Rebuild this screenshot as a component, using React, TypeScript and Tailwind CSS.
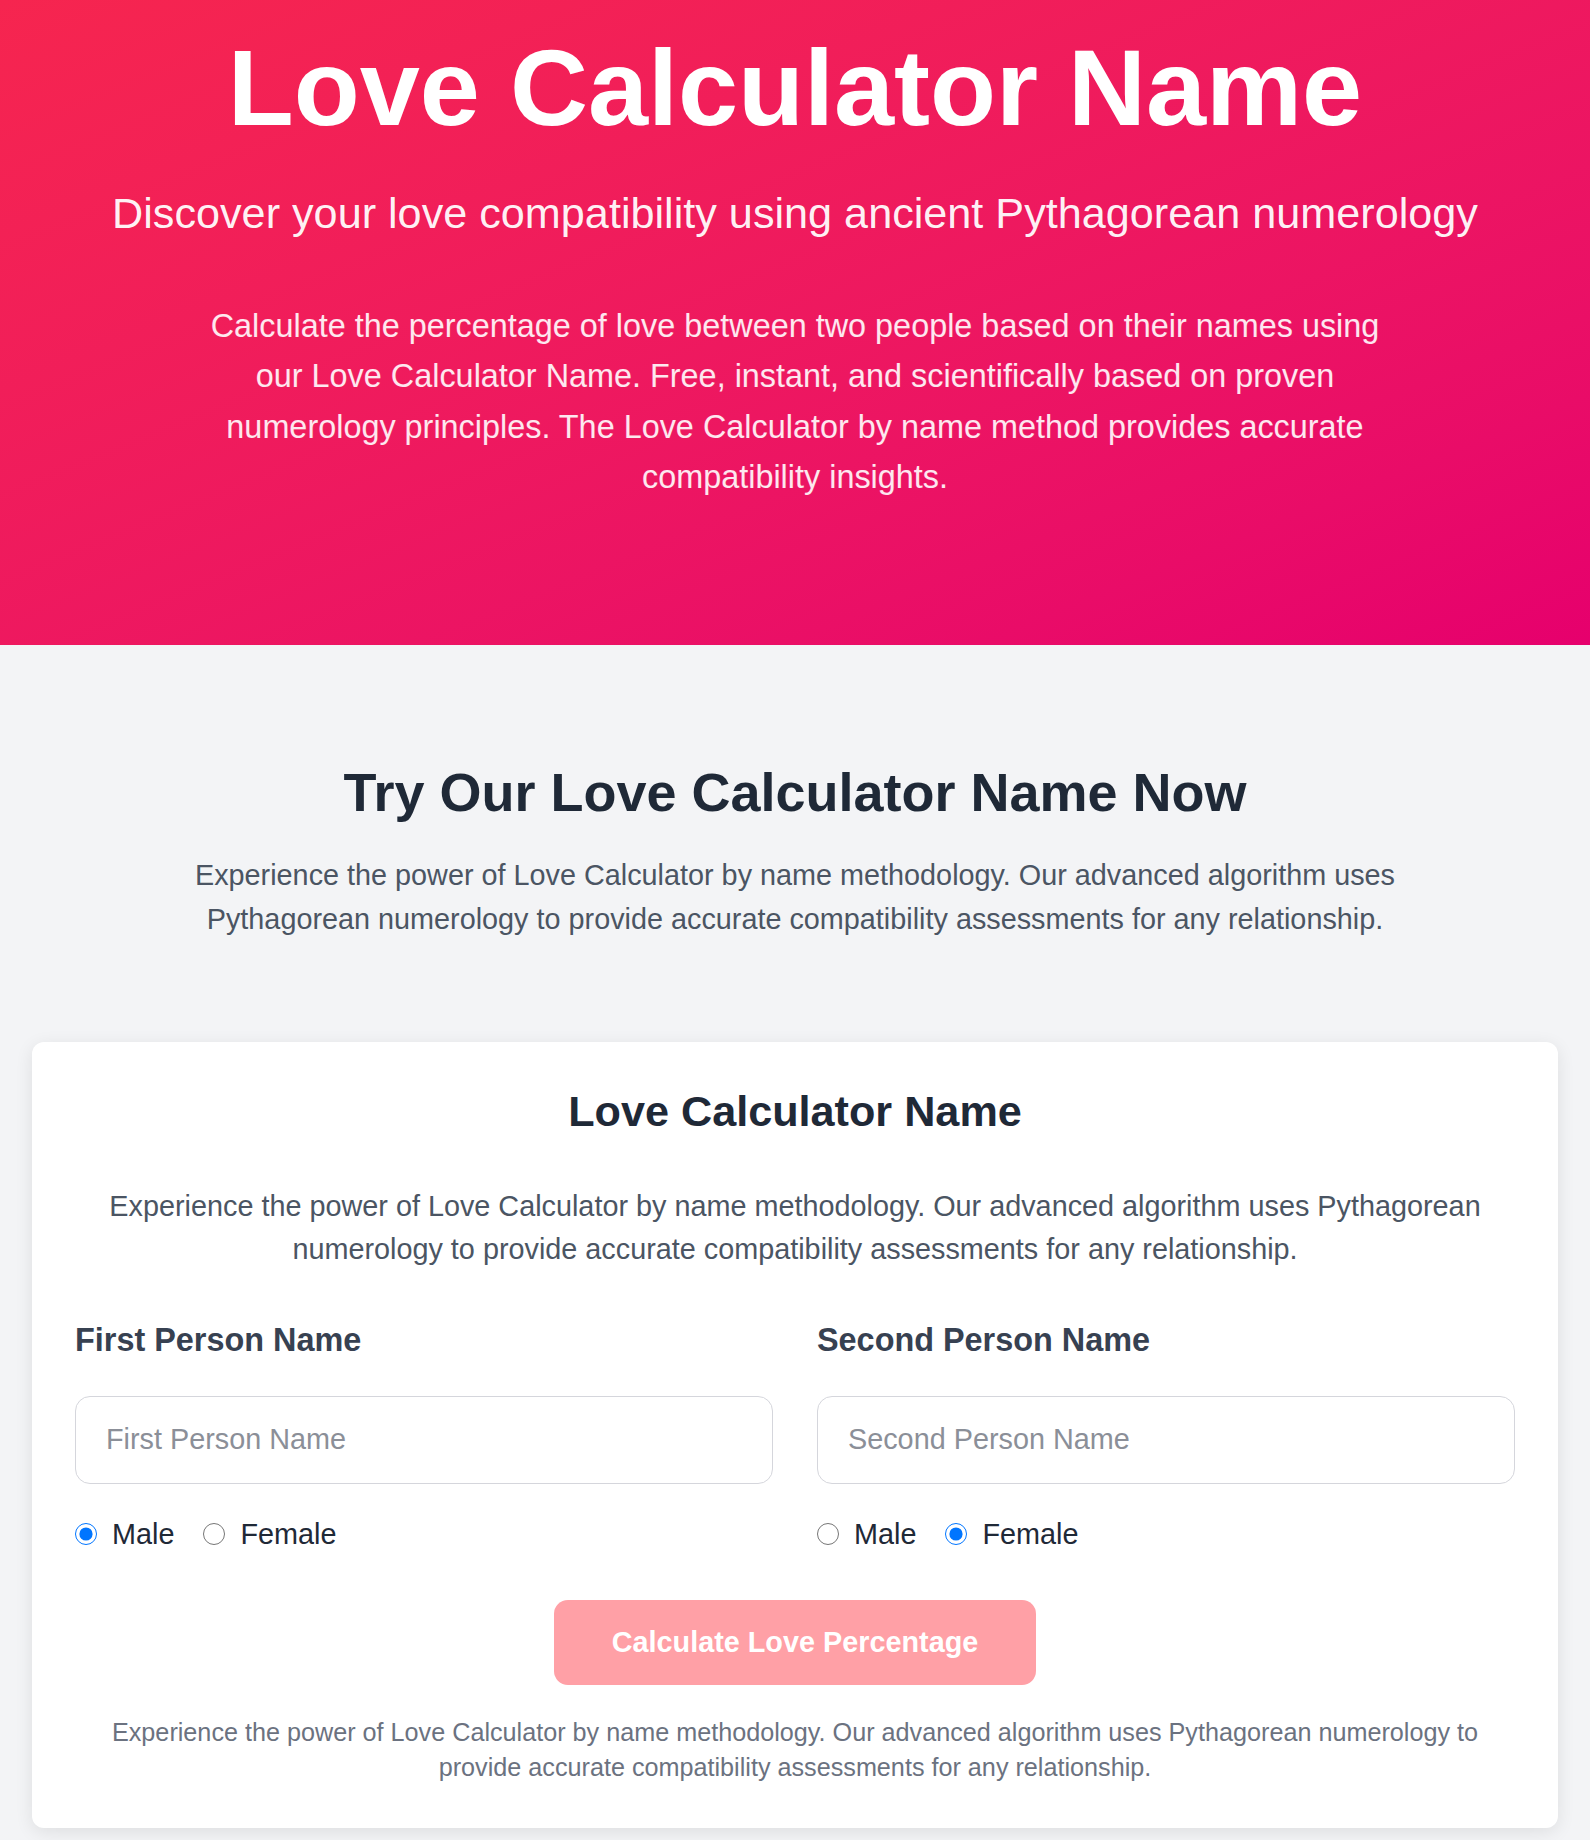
import React from 'react'

function GenderPicker({ name, checked }: { name: string; checked: 'male' | 'female' }) {
  return (
    <div className="mt-[29px] flex h-[43px] items-center gap-[29px] text-[28.8px] text-[#1f2937]">
      <label className="flex items-center gap-[15px]">
        <input type="radio" name={name} defaultChecked={checked === 'male'} className="m-0 h-[22px] w-[22px]" />
        <span>Male</span>
      </label>
      <label className="flex items-center gap-[15px]">
        <input type="radio" name={name} defaultChecked={checked === 'female'} className="m-0 h-[22px] w-[22px]" />
        <span>Female</span>
      </label>
    </div>
  )
}

function NameField({ label, name, checked }: { label: string; name: string; checked: 'male' | 'female' }) {
  return (
    <div>
      <label className="block text-[32.4px] font-bold leading-[48.6px] text-[#374151]">{label}</label>
      <input
        type="text"
        placeholder={label}
        className="mt-[31px] block h-[88px] w-full rounded-[15px] border-[1.5px] border-[#d5d6dc] bg-white px-[30px] text-[28.8px] text-[#1f2937] outline-none placeholder:text-[#8b8f98]"
      />
      <GenderPicker name={name} checked={checked} />
    </div>
  )
}

export default function App() {
  return (
    <div className="min-h-screen bg-[#f3f4f6] font-['Liberation_Sans',Arial,sans-serif]">
      <header className="bg-linear-to-br from-[#f6254f] to-[#e6006d] pt-[23px] pb-[143px] text-center text-white">
        <h1 className="text-[108px] font-bold leading-[130px]">Love Calculator Name</h1>
        <p className="mt-[28px] text-[43.2px] leading-[64.8px] text-white/95">
          Discover your love compatibility using ancient Pythagorean numerology
        </p>
        <p className="mx-auto mt-[55px] max-w-[1200px] text-[32.4px] leading-[50.4px] text-white/90">
          Calculate the percentage of love between two people based on their names using our Love Calculator Name.
          Free, instant, and scientifically based on proven numerology principles. The Love Calculator by name method
          provides accurate compatibility insights.
        </p>
      </header>

      <main className="px-[32px] pt-[115px] pb-[48px]">
        <h2 className="text-center text-[54px] font-bold leading-[65px] text-[#1f2937]">
          Try Our Love Calculator Name Now
        </h2>
        <p className="mx-auto mt-[29px] max-w-[1290px] text-center text-[28.8px] leading-[43.2px] text-[#4b5563]">
          Experience the power of Love Calculator by name methodology. Our advanced algorithm uses Pythagorean
          numerology to provide accurate compatibility assessments for any relationship.
        </p>

        <section className="mt-[101px] rounded-[12px] bg-white p-[43px] shadow-[0_4px_18px_rgba(0,0,0,0.09)]">
          <h3 className="text-center text-[43.2px] font-bold leading-[52px] text-[#1f2937]">Love Calculator Name</h3>
          <p className="mt-[48px] text-center text-[28.8px] leading-[43.2px] text-[#4b5563]">
            Experience the power of Love Calculator by name methodology. Our advanced algorithm uses Pythagorean
            numerology to provide accurate compatibility assessments for any relationship.
          </p>

          <div className="mt-[45px] grid grid-cols-2 gap-x-[44px]">
            <NameField label="First Person Name" name="gender1" checked="male" />
            <NameField label="Second Person Name" name="gender2" checked="female" />
          </div>

          <div className="mt-[44px] flex justify-center">
            <button
              type="button"
              className="h-[85px] w-[482px] rounded-[14px] bg-[#ffa0a6] text-[28.8px] font-bold text-white"
            >
              Calculate Love Percentage
            </button>
          </div>

          <p className="mt-[30px] text-center text-[25.2px] leading-[35.3px] text-[#6b7280]">
            Experience the power of Love Calculator by name methodology. Our advanced algorithm uses Pythagorean
            numerology to provide accurate compatibility assessments for any relationship.
          </p>
        </section>
      </main>
    </div>
  )
}
